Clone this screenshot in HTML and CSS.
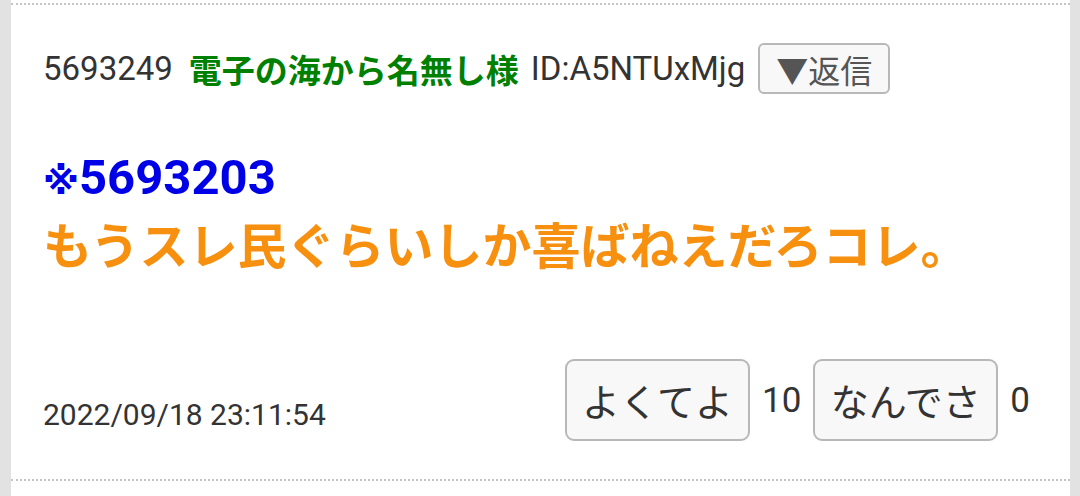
FILE: index.html
```html
<!DOCTYPE html>
<html lang="ja">
<head>
<meta charset="utf-8">
<link rel="stylesheet" href="styles.css">
</head>
<body>
<div class="card">
  <div class="post">
    <div class="post-head">
      <span class="num">5693249</span>
      <span class="name">電子の海から名無し様</span>
      <span class="uid">ID:A5NTUxMjg</span>
      <button class="reply">▼返信</button>
    </div>
    <div class="post-body">
      <div class="quote"><span class="mark">※</span>5693203</div>
      <div class="msg">もうスレ民ぐらいしか喜ばねえだろコレ。</div>
    </div>
    <div class="post-foot">
      <span class="date">2022/09/18 23:11:54</span>
      <div class="votes">
        <button class="vote">よくてよ</button>
        <span class="count">10</span>
        <button class="vote">なんでさ</button>
        <span class="count">0</span>
      </div>
    </div>
  </div>
</div>
</body>
</html>
```
FILE: styles.css
```css
html, body {
  margin: 0;
  padding: 0;
  background: #e2e2e2;
  height: 100%;
}
body {
  font-family: Roboto, "Noto Sans CJK JP", sans-serif;
  color: #333;
}
.card {
  margin: 0 10px 0 11px;
  background: #fff;
  height: 100%;
  padding-top: 3px;
  box-sizing: border-box;
}
.post {
  border-top: 2px dotted #c4c4c4;
  border-bottom: 2px dotted #c4c4c4;
  padding: 38px 40px 38px 32px;
}
.post-head {
  display: flex;
  align-items: center;
  height: 51px;
  font-size: 33px;
  color: #333;
}
.num { margin-right: 16px; }
.name {
  font-family: "Noto Sans CJK JP", sans-serif;
  font-weight: bold;
  font-size: 33px;
  color: #008000;
  margin-right: 12px;
}
.uid { margin-right: 13px; }
.reply {
  height: 51px;
  box-sizing: border-box;
  border: 2px solid #b8b8b8;
  border-radius: 6px;
  background: #f8f8f8;
  padding: 0 16px;
  font-family: "Noto Sans CJK JP", sans-serif;
  font-size: 32px;
  line-height: 1;
  color: #555;
  display: flex;
  align-items: center;
}
.post-body {
  margin-top: 56px;
}
.quote {
  font-family: Roboto, sans-serif;
  font-weight: bold;
  font-size: 49px;
  line-height: 56px;
  color: #0000e6;
}
.mark {
  font-family: "DejaVu Sans", "Noto Sans CJK JP", sans-serif;
  font-weight: bold;
  font-size: 37px;
}
.msg {
  font-family: "Noto Sans CJK JP", sans-serif;
  font-weight: bold;
  font-size: 49px;
  line-height: 60px;
  color: #f7900f;
  margin-top: 3px;
}
.post-foot {
  margin-top: 86px;
  display: flex;
  justify-content: space-between;
  align-items: flex-end;
}
.date {
  font-size: 30px;
  line-height: 36px;
  margin-bottom: 8px;
  color: #333;
}
.votes {
  display: flex;
  align-items: center;
  gap: 12px;
}
.vote {
  height: 82px;
  width: 185px;
  box-sizing: border-box;
  border: 2px solid #b8b8b8;
  border-radius: 9px;
  background: #f8f8f8;
  padding: 0;
  font-family: "Noto Sans CJK JP", sans-serif;
  font-size: 38px;
  line-height: 1;
  color: #333;
}
.count {
  font-size: 35px;
  color: #333;
}
```
